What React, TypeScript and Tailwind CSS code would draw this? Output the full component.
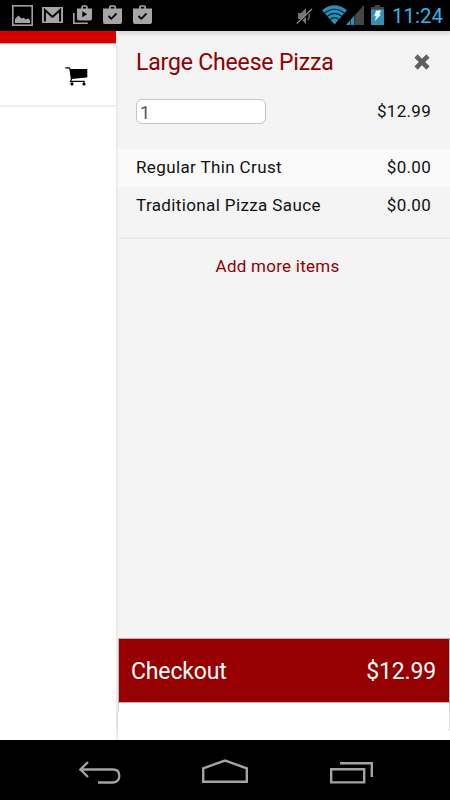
import React from "react";

const GmailIcon = () => (
  <svg width="21" height="16" viewBox="0 0 21 16" shapeRendering="geometricPrecision">
    <rect width="21" height="16" fill="#a6a6a6" />
    <path d="M2.9 14.5V3L10.5 10 18.1 3v11.5" fill="none" stroke="#000" strokeWidth="2" />
  </svg>
);

const PictureIcon = () => (
  <svg width="21" height="21" viewBox="0 0 21 21">
    <rect x=".8" y=".8" width="19.4" height="19.4" fill="none" stroke="#a0a0a0" strokeWidth="1.6" />
    <path d="M3 18v-4L6.5 10.5l3 3 2-.7 2.5 1.7 2-1.2 2 2V18z" fill="#a6a6a6" />
  </svg>
);

const PlayBagIcon = () => (
  <svg width="20" height="20" viewBox="0 0 20 20">
    <path d="M.8 8v10.2h14" fill="none" stroke="#a6a6a6" strokeWidth="1.6" />
    <path d="M9 4V2.2Q9 1 10.2 1h2.6Q14 1 14 2.2V4" fill="none" stroke="#a6a6a6" strokeWidth="1.6" />
    <path d="M4 3.5h15v10q0 2-2 2H6q-2 0-2-2z" fill="#a6a6a6" />
    <path d="M9.3 6.2v6l4.8-3z" fill="#000" />
  </svg>
);

const CheckBagIcon = () => (
  <svg width="19" height="20" viewBox="0 0 19 20">
    <path d="M6.8 4V2.2Q6.8 1 8 1h3q1.2 0 1.2 1.2V4" fill="none" stroke="#a6a6a6" strokeWidth="1.7" />
    <path d="M0 3.5h19V17q0 2-2 2H2q-2 0-2-2z" fill="#a6a6a6" />
    <path d="M5.5 11l2.8 2.8 5.2-5.3" fill="none" stroke="#000" strokeWidth="1.8" />
  </svg>
);

const MuteIcon = () => (
  <svg width="17" height="18" viewBox="0 0 17 18">
    <path d="M2 6h3l5-5v16l-5-5H2z" fill="#747474" />
    <path d="M12 5q2.5 4 0 8" fill="none" stroke="#666" strokeWidth="1.5" />
    <path d="M1 17.5L16.4 2.8" stroke="#000" strokeWidth="1.2" />
    <path d="M.8 16.4L16 2" stroke="#858585" strokeWidth="1.4" />
  </svg>
);

const WifiIcon = () => (
  <svg width="25" height="20" viewBox="0 0 25 20">
    <path d="M0 5.2Q12.5-4.8 25 5.2L12.5 19.5z" fill="#2b8eb6" />
    <path d="M2.5 8.3Q12.5.2 22.5 8.3M5 11.4Q12.5 5.2 20 11.4M8 14.6Q12.5 10.8 17 14.6" fill="none" stroke="#07212c" strokeWidth="1.2" />
  </svg>
);

const SignalIcon = () => (
  <svg width="18" height="20" viewBox="0 0 18 20">
    <path d="M18 0v20H0z" fill="#464646" />
    <path d="M0 20L8.5 10.5V20z" fill="#2b8eb6" />
    <path d="M4.5 14v6M8.7 9v11" stroke="#07212c" strokeWidth=".7" />
  </svg>
);

const BatteryIcon = () => (
  <svg width="13" height="20" viewBox="0 0 13 20">
    <path d="M4 0h5v2h4v3H0V2h4z" fill="#464646" />
    <path d="M0 4.5h13V20H0z" fill="#3090b8" />
    <path d="M5.2 5.5h5l-2 4h2L4 16l1-4.8H3z" fill="#e5f4fa" />
  </svg>
);

const CartIcon = () => (
  <svg width="23" height="19" viewBox="0 0 23 19">
    <path d="M.7.8h3.4q.5 0 .7.6l1.7 10.4-.9 2.6h13.6" fill="none" stroke="#000" strokeWidth="1.2" strokeLinecap="round" />
    <path d="M5 2h16.7q.6 0 .6.6v7.2q0 .6-.6.7L6.5 12z" fill="#000" />
    <circle cx="7" cy="17" r="1.6" />
    <circle cx="19" cy="17" r="1.6" />
    <path d="M7 14.5V17M19 14.5V17" stroke="#000" strokeWidth="1" />
  </svg>
);

const CloseIcon = () => (
  <svg width="16" height="16" viewBox="0 0 16 16">
    <path d="M2.9 2.9l10.2 10.2M13.1 2.9L2.9 13.1" stroke="#5f5f5f" strokeWidth="4.6" />
    <path d="M1.4 3.7L3.7 1.4M12.3 1.4l2.3 2.3M14.6 12.3l-2.3 2.3M3.7 14.6l-2.3-2.3" stroke="#5f5f5f" strokeWidth="1.6" strokeLinecap="round" />
  </svg>
);

const BackIcon = () => (
  <svg width="42" height="24" viewBox="0 0 42 24">
    <path d="M9 1L1.5 8.5 9 16M2 8.5h32q6.3 0 6.3 6.3t-6.3 6.7H19" fill="none" stroke="#a3a3a3" strokeWidth="2.3" />
  </svg>
);

const HomeIcon = () => (
  <svg width="46" height="26" viewBox="0 0 46 26">
    <path d="M1.2 9.3L23 1.5l21.8 7.8v13.5H1.2z" fill="none" stroke="#a3a3a3" strokeWidth="2.4" />
  </svg>
);

const RecentsIcon = () => (
  <svg width="44" height="24" viewBox="0 0 44 24">
    <path d="M1.2 8.2h33v13.2h-33zM10 2.2h31.8V16" fill="none" stroke="#a3a3a3" strokeWidth="2.4" />
  </svg>
);

function StatusBar() {
  return (
    <header className="flex h-[31px] shrink-0 items-start bg-black">
      <div className="flex items-start pt-[5px] pl-3">
        <PictureIcon />
        <div className="mt-[2px] ml-[9px]"><GmailIcon /></div>
        <div className="ml-[10px]"><PlayBagIcon /></div>
        <div className="ml-[10px]"><CheckBagIcon /></div>
        <div className="ml-[11px]"><CheckBagIcon /></div>
      </div>
      <div className="ml-auto flex items-start pt-[5px] pr-[8px]">
        <div className="mt-[2px]"><MuteIcon /></div>
        <div className="ml-[9px]"><WifiIcon /></div>
        <div className="-ml-px"><SignalIcon /></div>
        <div className="ml-[7px]"><BatteryIcon /></div>
        <span className="ml-[8px] w-[50px] text-right text-[20.5px] leading-[22px] whitespace-nowrap text-[#33b5e5]">11:24</span>
      </div>
    </header>
  );
}

function ItemRow({ name, price, shaded = false }: { name: string; price: string; shaded?: boolean }) {
  return (
    <div className={`flex items-center justify-between pr-[19px] pb-[2px] pl-[18px] leading-6 ${shaded ? "h-[38px] bg-[#fafafa]" : "h-[37px]"}`}>
      <span>{name}</span>
      <span className="tracking-[0.3px]">{price}</span>
    </div>
  );
}

export default function App() {
  return (
    <div className="flex h-[800px] w-[450px] flex-col overflow-hidden bg-white font-[Roboto,sans-serif]">
      <StatusBar />
      <main className="flex h-[709px] shrink-0">
        <div className="w-[116px] shrink-0">
          <div className="h-3 bg-[#d60000]" />
          <div className="flex h-[64px] justify-end border-t border-b-2 border-t-[#f2a0a0] border-b-[#eeeeee] pt-[23px] pr-[28px]">
            <CartIcon />
          </div>
        </div>
        <section className="flex min-w-0 flex-1 flex-col border-l-2 border-[#ebebeb]">
          <div className="h-[607px] bg-[#f4f4f4] text-[17px] tracking-[0.38px] text-[#111]">
            <div className="h-[6px] bg-linear-to-b from-[#d8d8d8] to-[#f4f4f4]" />
            <div className="flex h-[51px] items-start justify-between pr-[20px] pl-[18px]">
              <h1 className="pt-[10px] text-[23px] leading-8 tracking-[-0.17px] text-[#900000]">Large Cheese Pizza</h1>
              <div className="pt-[16.5px]"><CloseIcon /></div>
            </div>
            <div className="flex h-[61px] items-start justify-between pr-[19px] pl-[18px]">
              <div className="mt-[11px] h-[25px] w-[130px] rounded-[6px] border border-[#c4c4c4] bg-white pl-[3px] text-[18px] leading-[25px] text-[#555]">1</div>
              <span className="mt-[11px] leading-6 tracking-[0.3px]">$12.99</span>
            </div>
            <ItemRow name="Regular Thin Crust" price="$0.00" shaded />
            <ItemRow name="Traditional Pizza Sauce" price="$0.00" />
            <div className="mt-[13px] h-[2px] bg-[#ebebeb]" />
            <div className="pt-[15px] pr-[13px] text-center leading-6 tracking-[0.25px] text-[#900000]">Add more items</div>
          </div>
          <div className="flex h-[65px] items-center justify-between border border-[#b8b8b8] bg-[#960000] pt-[3px] pr-[13px] pl-[12px] text-[23px] tracking-[-0.15px] text-white">
            <span>Checkout</span>
            <span>$12.99</span>
          </div>
          <div className="h-[9px] border-x border-[#d5d5d5]" />
          <div className="flex h-[19px] justify-between">
            <div className="-ml-px w-px bg-[#d8d8d8]" />
            <div className="w-px bg-[#ddd]" />
          </div>
        </section>
      </main>
      <nav className="flex h-[60px] shrink-0 items-start bg-black pt-[19px] pl-[79px]">
        <div className="mt-[2px] w-[122px]"><BackIcon /></div>
        <div className="w-[129px] pl-px"><HomeIcon /></div>
        <div className="mt-[2px]"><RecentsIcon /></div>
      </nav>
    </div>
  );
}
